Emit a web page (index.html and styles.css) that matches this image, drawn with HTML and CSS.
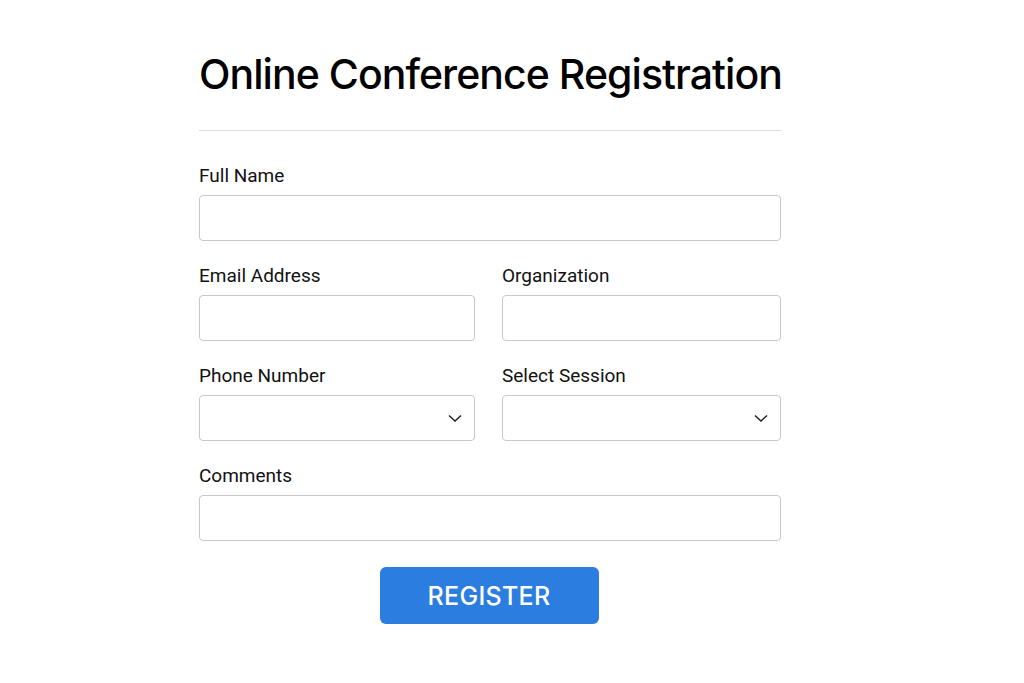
FILE: index.html
```html
<!DOCTYPE html>
<html lang="en">
<head>
<meta charset="utf-8">
<title>Online Conference Registration</title>
<link rel="stylesheet" href="styles.css">
</head>
<body>
<main class="page">
  <form class="form">
    <h1 class="title">Online Conference Registration</h1>
    <hr class="divider">
    <div class="field">
      <label class="label">Full Name</label>
      <div class="input"></div>
    </div>
    <div class="row">
      <div class="field">
        <label class="label">Email Address</label>
        <div class="input"></div>
      </div>
      <div class="field">
        <label class="label">Organization</label>
        <div class="input"></div>
      </div>
    </div>
    <div class="row">
      <div class="field">
        <label class="label">Phone Number</label>
        <div class="input select">
          <svg class="chev" width="14" height="8" viewBox="0 0 14 8"><path d="M1 1.5l6 5.5 6-5.5" fill="none" stroke="#222" stroke-width="1.5"/></svg>
        </div>
      </div>
      <div class="field">
        <label class="label">Select Session</label>
        <div class="input select">
          <svg class="chev" width="14" height="8" viewBox="0 0 14 8"><path d="M1 1.5l6 5.5 6-5.5" fill="none" stroke="#222" stroke-width="1.5"/></svg>
        </div>
      </div>
    </div>
    <div class="field">
      <label class="label">Comments</label>
      <div class="input"></div>
    </div>
    <div class="actions">
      <button type="button" class="btn">REGISTER</button>
    </div>
  </form>
</main>
</body>
</html>
```
FILE: styles.css
```css
html, body {
  margin: 0;
  padding: 0;
  background: #fff;
}
body {
  font-family: Roboto, "Liberation Sans", sans-serif;
  color: #111;
}
.page {
  display: flex;
  justify-content: flex-start;
  padding-left: 199px;
  padding-top: 48px;
}
.form {
  width: 582px;
  display: flex;
  flex-direction: column;
}
.title {
  margin: 0;
  font-family: Inter, Roboto, sans-serif;
  font-weight: 500;
  font-size: 41px;
  line-height: 52px;
  letter-spacing: -0.95px;
  color: #000;
  white-space: nowrap;
}
.divider {
  border: 0;
  border-top: 1px solid #dcdcdc;
  margin: 30px 0 33px;
}
.field {
  display: flex;
  flex-direction: column;
  flex: 1;
  margin-bottom: 23px;
}
.row {
  display: flex;
  gap: 27px;
}
.row .field:last-child {
  flex: 0 0 279px;
}
.label {
  font-size: 19px;
  line-height: 24px;
  color: #111;
  margin-bottom: 7px;
}
.input {
  height: 44px;
  border: 1px solid #c8c8c8;
  border-radius: 4px;
  background: #fff;
  position: relative;
}
.select {
  display: flex;
  align-items: center;
  justify-content: flex-end;
  padding-right: 12px;
}
.actions {
  display: flex;
  justify-content: center;
  padding-top: 3px;
}
.btn {
  width: 219px;
  height: 57px;
  margin-right: 2px;
  border: 0;
  border-radius: 6px;
  background: #2b7de0;
  color: #fff;
  font-family: Inter, Roboto, sans-serif;
  font-size: 25px;
  font-weight: 500;
  letter-spacing: 0.3px;
}
```
